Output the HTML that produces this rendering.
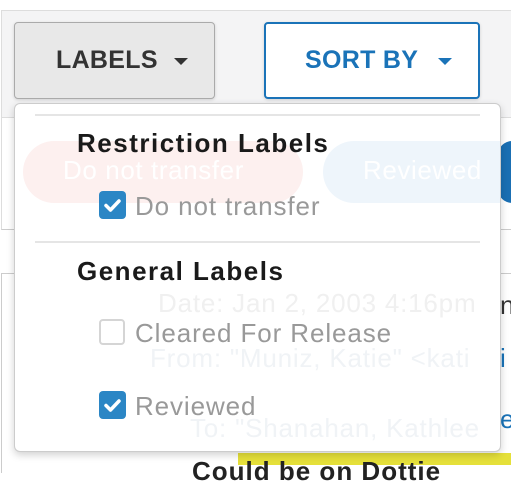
<!DOCTYPE html>
<html><head><meta charset="utf-8"><style>
*{box-sizing:border-box;margin:0;padding:0}
body{width:511px;height:464px;overflow:hidden;background:#fff;font-family:"Liberation Sans","DejaVu Sans",sans-serif;position:relative}
.abs{position:absolute;white-space:nowrap}
.opt{font-size:26px;color:#999;letter-spacing:0.9px}
.hd{font-size:26px;font-weight:bold;color:#1a1a1a;letter-spacing:1.5px}
</style></head><body>
<div class="abs" style="left:1px;top:10px;width:520px;height:108px;background:#f4f4f5;border:1px solid #ddd;border-right:none"></div>
<div class="abs" style="left:1px;top:118px;width:520px;height:112px;background:#fff;border-left:1px solid #ddd;border-bottom:1px solid #ccc"></div>
<div class="abs" style="left:1px;top:273px;width:520px;height:200px;background:#fff;border-left:1px solid #ccc;border-top:1px solid #ccc"></div>
<div class="abs" style="left:498px;top:141px;width:20px;height:62px;background:#1a6fb3;border-radius:14px 0 0 14px"></div>
<div class="abs" style="left:238px;top:453px;width:280px;height:12px;background:#e5e03a"></div>
<div class="abs" style="left:500px;top:290px;font-size:26px;color:#333">n</div>
<div class="abs" style="left:500px;top:343px;font-size:26px;color:#1a73b8">i</div>
<div class="abs" style="left:500px;top:404px;font-size:26px;color:#1a73b8">e</div>
<div class="abs" style="left:192px;top:456px;font-size:26px;font-weight:bold;color:#222;letter-spacing:1px">Could be on Dottie</div>

<div class="abs" style="left:14px;top:22px;width:201px;height:77px;background:#e8e8e8;border:1px solid #aaa;border-radius:4px;box-shadow:0 1px 3px rgba(0,0,0,.15)"></div>
<div class="abs" style="left:56px;top:46px;font-size:25px;font-weight:bold;color:#333;letter-spacing:0.3px">LABELS</div>
<div class="abs" style="left:174px;top:58px;width:0;height:0;border-left:7px solid transparent;border-right:7px solid transparent;border-top:7px solid #333"></div>

<div class="abs" style="left:264px;top:22px;width:216px;height:77px;background:#fff;border:2px solid #1a73b8;border-radius:4px;box-shadow:0 1px 3px rgba(0,0,0,.15)"></div>
<div class="abs" style="left:305px;top:46px;font-size:25px;font-weight:bold;color:#1a73b8;letter-spacing:0.3px">SORT BY</div>
<div class="abs" style="left:438px;top:58px;width:0;height:0;border-left:7px solid transparent;border-right:7px solid transparent;border-top:7px solid #1a73b8"></div>

<div class="abs" style="left:14px;top:103px;width:487px;height:349px;background:#fff;border:1px solid #ccc;border-radius:6px;box-shadow:0 3px 8px rgba(0,0,0,.18)"></div>
<div class="abs" style="left:23px;top:141px;width:280px;height:62px;border-radius:31px;background:#fdf0ef"></div>
<div class="abs" style="left:323px;top:141px;width:177px;height:62px;border-radius:31px 0 0 31px;background:#eef5fb"></div>
<div class="abs" style="left:63px;top:155px;font-size:26px;color:#fff;letter-spacing:0.6px">Do not transfer</div>
<div class="abs" style="left:363px;top:155px;font-size:26px;color:#fff;letter-spacing:0.6px">Reviewed</div>
<div class="abs" style="left:158px;top:288px;font-size:26px;color:#f0f0f0;letter-spacing:0.8px">Date: Jan 2, 2003 4:16pm</div>
<div class="abs" style="left:150px;top:343px;font-size:26px;color:#f0f3f6;letter-spacing:0.8px">From: "Muniz, Katie" &lt;kati</div>
<div class="abs" style="left:190px;top:413px;font-size:26px;color:#f0f3f6;letter-spacing:0.8px">To: "Shanahan, Kathlee</div>

<div class="abs" style="left:35px;top:114px;width:445px;height:2px;background:#e5e5e5"></div>
<div class="abs" style="left:35px;top:241px;width:445px;height:2px;background:#e5e5e5"></div>
<div class="abs hd" style="left:77px;top:128px">Restriction Labels</div>
<div class="abs hd" style="left:77px;top:256px">General Labels</div>

<div class="abs" style="left:99px;top:191px;width:27px;height:28px;background:#2b86c5;border-radius:4px"></div>
<svg class="abs" style="left:99px;top:191px" width="27" height="28"><path d="M7 14.5l4.5 4.5 8.5-9" fill="none" stroke="#fff" stroke-width="3.5" stroke-linecap="round" stroke-linejoin="round"/></svg>
<div class="abs opt" style="left:135px;top:191px">Do not transfer</div>

<div class="abs" style="left:99px;top:319px;width:26px;height:26px;border:2px solid #d5d5d5;border-radius:4px;background:#fff"></div>
<div class="abs opt" style="left:135px;top:318px">Cleared For Release</div>

<div class="abs" style="left:99px;top:391px;width:27px;height:28px;background:#2b86c5;border-radius:4px"></div>
<svg class="abs" style="left:99px;top:391px" width="27" height="28"><path d="M7 14.5l4.5 4.5 8.5-9" fill="none" stroke="#fff" stroke-width="3.5" stroke-linecap="round" stroke-linejoin="round"/></svg>
<div class="abs opt" style="left:135px;top:391px">Reviewed</div>
</body></html>
